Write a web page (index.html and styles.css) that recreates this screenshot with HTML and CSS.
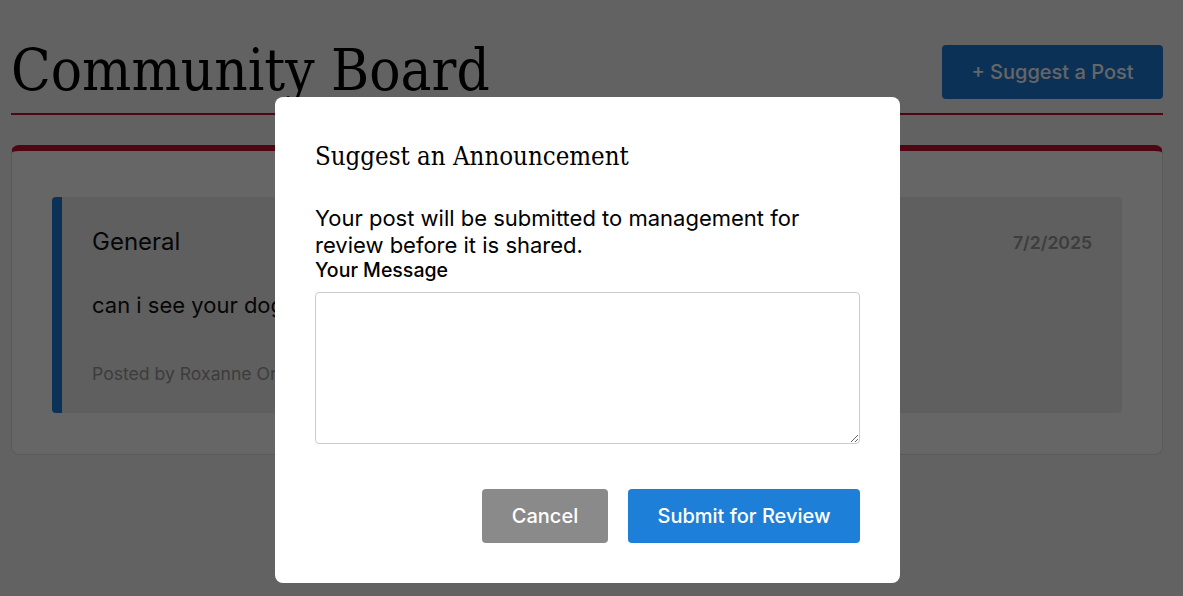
FILE: index.html
```html
<!DOCTYPE html>
<html>
<head>
<meta charset="utf-8">
<link rel="stylesheet" href="styles.css">
</head>
<body>
<div class="page">
  <header class="header">
    <h1 class="title">Community Board</h1>
    <button class="suggest-btn">+ Suggest a Post</button>
  </header>
  <section class="board">
    <article class="post">
      <div class="post-head">
        <h2 class="post-cat">General</h2>
        <span class="post-date">7/2/2025</span>
      </div>
      <p class="post-body">can i see your dog</p>
      <p class="post-meta">Posted by Roxanne Ortiz</p>
    </article>
  </section>
</div>
<div class="overlay">
  <div class="modal">
    <h2 class="modal-title">Suggest an Announcement</h2>
    <p class="modal-text">Your post will be submitted to management for review before it is shared.</p>
    <label class="modal-label">Your Message</label>
    <textarea class="modal-input"></textarea>
    <div class="modal-actions">
      <button class="btn btn-cancel">Cancel</button>
      <button class="btn btn-submit">Submit for Review</button>
    </div>
  </div>
</div>
</body>
</html>
```

FILE: styles.css
```css
* { box-sizing: border-box; }
html, body { margin: 0; padding: 0; }
body {
  background: #f8f6f6;
  font-family: Inter, "Liberation Sans", sans-serif;
  color: #111;
  width: 1183px;
  height: 596px;
  overflow: hidden;
}
.page { padding: 0 20px 0 11px; }
.header {
  display: flex;
  justify-content: space-between;
  align-items: flex-end;
  border-bottom: 2px solid #c8102e;
  padding-top: 45px;
  padding-bottom: 14px;
  height: 115px;
}
.title {
  margin: 0 0 -5px 0;
  font-family: "DejaVu Serif Condensed", "DejaVu Serif", serif;
  font-stretch: condensed;
  font-weight: 400;
  font-size: 57.8px;
  line-height: 68px;
  color: #000;
}
.suggest-btn {
  width: 221px;
  height: 54px;
  background: #1c7ad9;
  color: #fff;
  border: none;
  border-radius: 4px;
  font-family: Inter, sans-serif;
  font-size: 20px;
  font-weight: 500;
}
.board {
  margin-top: 30px;
  background: #fff;
  border: 1px solid #e0e0e0;
  border-top: 6px solid #c8102e;
  border-radius: 8px;
  padding: 46px 40px 40px 40px;
  height: 310px;
}
.post {
  background: #ededed;
  border-left: 10px solid #1c7ad9;
  border-radius: 4px;
  padding: 30px 30px 20px 30px;
  height: 216px;
}
.post-head {
  display: flex;
  justify-content: space-between;
  align-items: center;
  height: 30px;
}
.post-cat { margin: 0; font-weight: 400; font-size: 24px; line-height: 30px; }
.post-date { font-size: 17.6px; font-weight: 600; color: #999; }
.post-body { margin: 34px 0 0 0; font-size: 22px; line-height: 28px; }
.post-meta { margin: 44px 0 0 0; font-size: 17.6px; line-height: 22px; color: #999; }
.overlay {
  position: fixed;
  inset: 0;
  background: rgba(0,0,0,0.6);
}
.modal {
  position: absolute;
  left: 275px;
  top: 97px;
  width: 625px;
  height: 486px;
  background: #fff;
  border-radius: 8px;
  padding: 40px;
  display: flex;
  flex-direction: column;
}
.modal-title {
  margin: 0;
  font-family: "DejaVu Serif Condensed", "DejaVu Serif", serif;
  font-stretch: condensed;
  font-weight: 400;
  font-size: 25.6px;
  line-height: 38px;
  color: #000;
}
.modal-text {
  margin: 30px 0 0 0;
  font-size: 22px;
  line-height: 27px;
  color: #000;
}
.modal-label { font-size: 19.5px; font-weight: 500; line-height: 22px; color: #000; }
.modal-input {
  margin-top: 11px;
  height: 152px;
  width: 100%;
  border: 1px solid #ccc;
  border-radius: 4px;
  resize: vertical;
  flex-shrink: 0;
}
.modal-actions {
  margin-top: 45px;
  display: flex;
  justify-content: flex-end;
  gap: 20px;
}
.btn {
  height: 54px;
  border: none;
  border-radius: 4px;
  color: #fff;
  font-family: Inter, sans-serif;
  font-size: 20px;
  font-weight: 500;
}
.btn-cancel { width: 126px; background: #8a8a8a; }
.btn-submit { width: 232px; background: #1e7fd8; }
```
